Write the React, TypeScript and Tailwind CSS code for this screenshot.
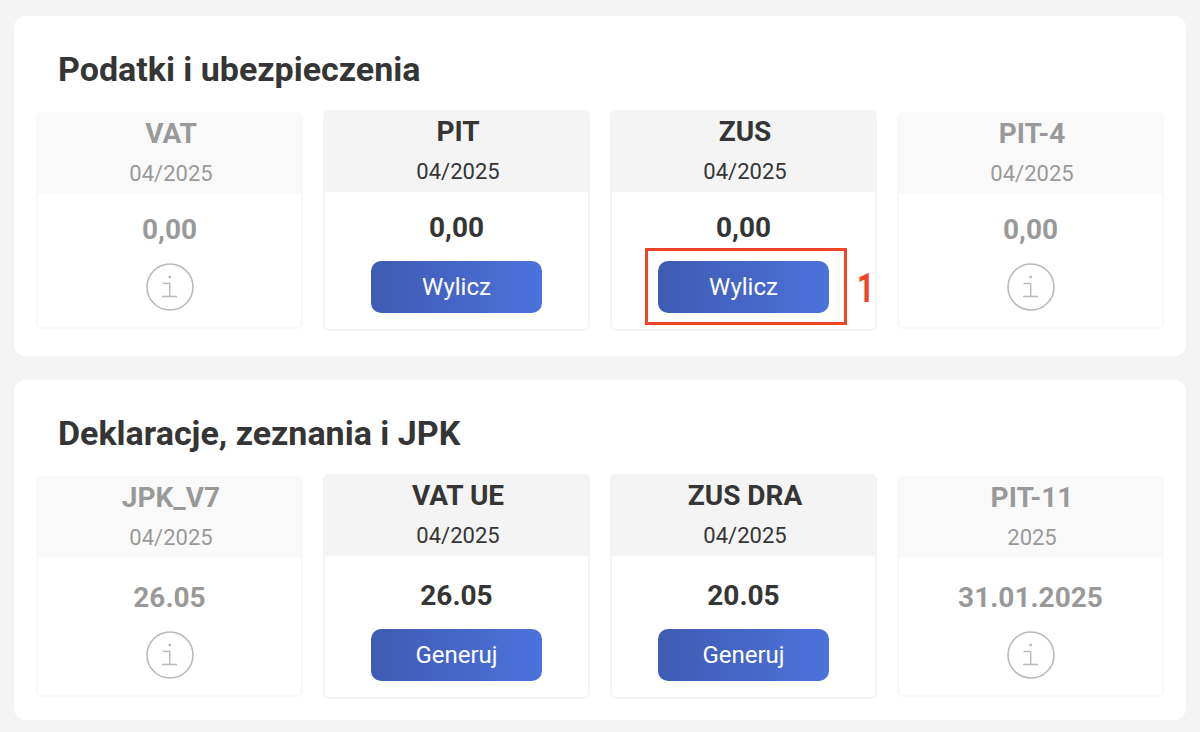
const font = { fontFamily: "Roboto, 'Liberation Sans', sans-serif" };

type Tile = {
  name: string;
  period: string;
  value: string;
  action?: string;
  marked?: boolean;
};

const taxes: Tile[] = [
  { name: "VAT", period: "04/2025", value: "0,00" },
  { name: "PIT", period: "04/2025", value: "0,00", action: "Wylicz" },
  { name: "ZUS", period: "04/2025", value: "0,00", action: "Wylicz", marked: true },
  { name: "PIT-4", period: "04/2025", value: "0,00" },
];

const declarations: Tile[] = [
  { name: "JPK_V7", period: "04/2025", value: "26.05" },
  { name: "VAT UE", period: "04/2025", value: "26.05", action: "Generuj" },
  { name: "ZUS DRA", period: "04/2025", value: "20.05", action: "Generuj" },
  { name: "PIT-11", period: "2025", value: "31.01.2025" },
];

export default function App() {
  return (
    <div style={font} className="flex h-[732px] flex-col gap-6 overflow-hidden bg-[#f4f4f4] px-3.5 pt-4 text-[#353535]">
      <Section title="Podatki i ubezpieczenia" tiles={taxes} />
      <Section title="Deklaracje, zeznania i JPK" tiles={declarations} tall />
    </div>
  );
}

function Section({ title, tiles, tall }: { title: string; tiles: Tile[]; tall?: boolean }) {
  return (
    <section className="h-[340px] shrink-0 rounded-xl bg-white px-[22px] pt-[30px]">
      <h2 className="ml-[22px] h-16 text-[34px] leading-[46px] font-bold">{title}</h2>
      <div className="grid grid-cols-4 items-center gap-5">
        {tiles.map((tile) => (
          <TileCard key={tile.name} tile={tile} tall={tall} />
        ))}
      </div>
    </section>
  );
}

function TileCard({ tile, tall }: { tile: Tile; tall?: boolean }) {
  return (
    <article
      className={`relative rounded-md border-2 border-[#f4f4f4] text-center ${
        tile.action ? "" : "opacity-50"
      }`}
    >
      <div className="h-20 bg-[#f4f4f4] pl-[3px]">
        <h3 className="text-[28px] leading-[40px] font-bold">{tile.name}</h3>
        <p className="text-[22px] leading-[40px]">{tile.period}</p>
      </div>
      <p className={`${tall ? "mt-[21px]" : "mt-[17px]"} text-[28px] leading-[38px] font-bold`}>{tile.value}</p>
      <div className="mt-3.5 mb-4 flex justify-center">
        {tile.action ? (
          <button
            type="button"
            className="h-[52px] w-[171px] rounded-[10px] bg-linear-to-r from-[#3f5bb2] to-[#4c72dc] text-[24px] font-normal text-white"
          >
            {tile.action}
          </button>
        ) : (
          <InfoIcon />
        )}
      </div>
      {tile.marked && (
        <>
          <div className="absolute top-[136px] left-[33px] h-[77px] w-[202px] border-[3px] border-[#ee4528]" />
          <span className="absolute top-[153px] left-[245px] origin-left scale-x-75 text-[40px] leading-[48px] font-bold text-[#ee4528]">1</span>
        </>
      )}
    </article>
  );
}

function InfoIcon() {
  return (
    <svg width="48" height="48" viewBox="0 0 48 48" fill="none" stroke="#777777" strokeWidth="1.6">
      <circle cx="24" cy="24" r="23" />
      <path d="M16.5 20.5h7.2v13M16 33.5h15" strokeWidth="1.4" />
      <path d="M23.7 12.7v2.6" strokeWidth="2.4" />
    </svg>
  );
}
